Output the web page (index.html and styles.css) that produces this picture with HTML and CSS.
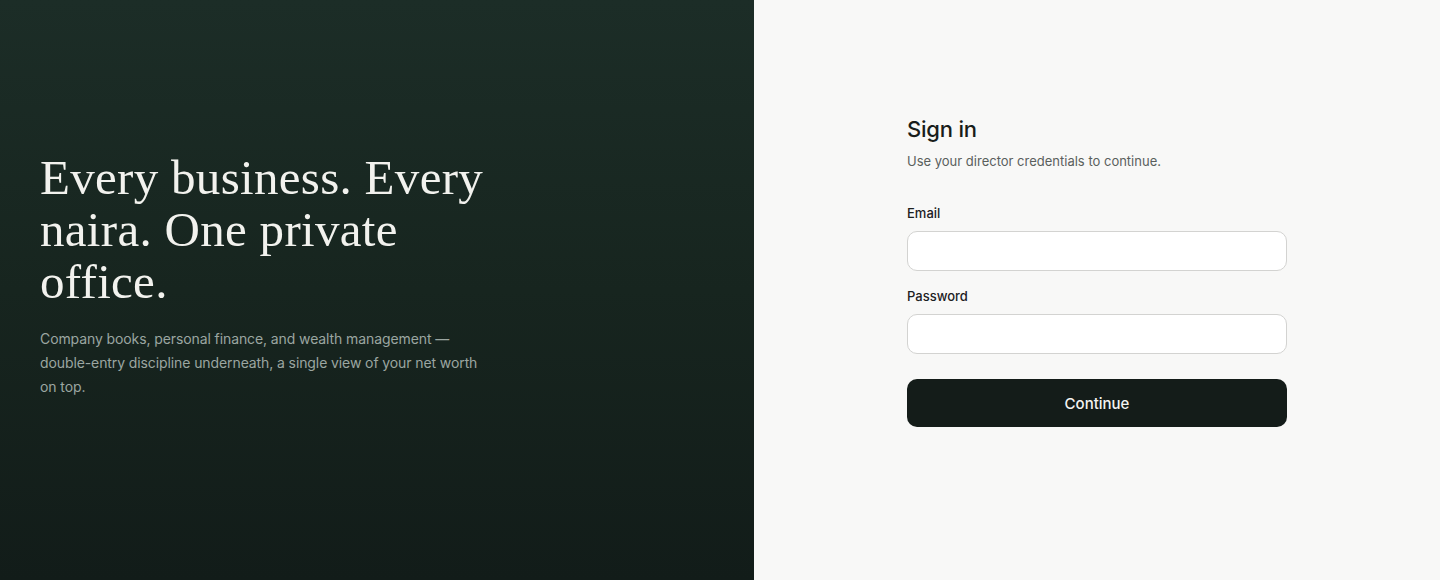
FILE: index.html
```html
<!DOCTYPE html>
<html lang="en">
<head>
<meta charset="utf-8">
<title>Sign in</title>
<link rel="stylesheet" href="styles.css">
</head>
<body>
<main class="layout">
  <section class="hero">
    <div class="hero-inner">
      <h1 class="hero-title">Every business. Every naira. One private office.</h1>
      <p class="hero-text">Company books, personal finance, and wealth management — double-entry discipline underneath, a single view of your net worth on top.</p>
    </div>
  </section>
  <section class="auth">
    <form class="auth-form">
      <h2 class="auth-title">Sign in</h2>
      <p class="auth-sub">Use your director credentials to continue.</p>
      <label class="field">
        <span class="field-label">Email</span>
        <input class="field-input" type="email">
      </label>
      <label class="field">
        <span class="field-label">Password</span>
        <input class="field-input" type="password">
      </label>
      <button class="btn" type="button">Continue</button>
    </form>
  </section>
</main>
</body>
</html>
```

FILE: styles.css
```css
* { box-sizing: border-box; }
html, body { margin: 0; padding: 0; }
body {
  font-family: Inter, "Noto Sans", sans-serif;
  background: #f8f8f7;
}
.layout {
  display: grid;
  grid-template-columns: 754px 1fr;
  height: 580px;
}
.hero {
  background: linear-gradient(180deg, #1c2d27 0%, #17251f 50%, #121c19 100%);
  display: flex;
  align-items: center;
  padding: 0 40px;
}
.hero-inner {
  width: 460px;
  margin-top: -29px;
}
.hero-title {
  margin: 0;
  font-family: "Liberation Serif", "Times New Roman", serif;
  font-weight: 400;
  font-size: 49px;
  line-height: 52px;
  color: #f2f2ee;
  letter-spacing: 0.3px;
}
.hero-text {
  margin: 19px 0 0;
  font-size: 14px;
  line-height: 24px;
  color: #9ba6a1;
  letter-spacing: -0.1px;
  max-width: 450px;
}
.auth {
  display: flex;
  align-items: center;
  justify-content: center;
}
.auth-form {
  width: 380px;
  display: flex;
  flex-direction: column;
  margin-top: -38px;
}
.auth-title {
  margin: 0;
  font-size: 22px;
  line-height: 28px;
  font-weight: 500;
  color: #181d1b;
  letter-spacing: -0.2px;
}
.auth-sub {
  margin: 8px 0 0;
  font-size: 13px;
  line-height: 20px;
  color: #5a5f5d;
}
.field {
  display: flex;
  flex-direction: column;
  margin-top: 15px;
}
.auth-sub + .field { margin-top: 32px; }
.field-label {
  font-size: 13px;
  line-height: 20px;
  font-weight: 500;
  color: #1c201f;
  margin-bottom: 8px;
}
.field-input {
  height: 40px;
  border: 1px solid #d3d3d1;
  border-radius: 10px;
  background: #ffffff;
  font: inherit;
  padding: 0 12px;
}
.btn {
  margin-top: 25px;
  height: 48px;
  border: none;
  border-radius: 10px;
  background: #141c19;
  color: #f4f4f2;
  font-family: inherit;
  font-size: 15px;
  font-weight: 500;
}
```
